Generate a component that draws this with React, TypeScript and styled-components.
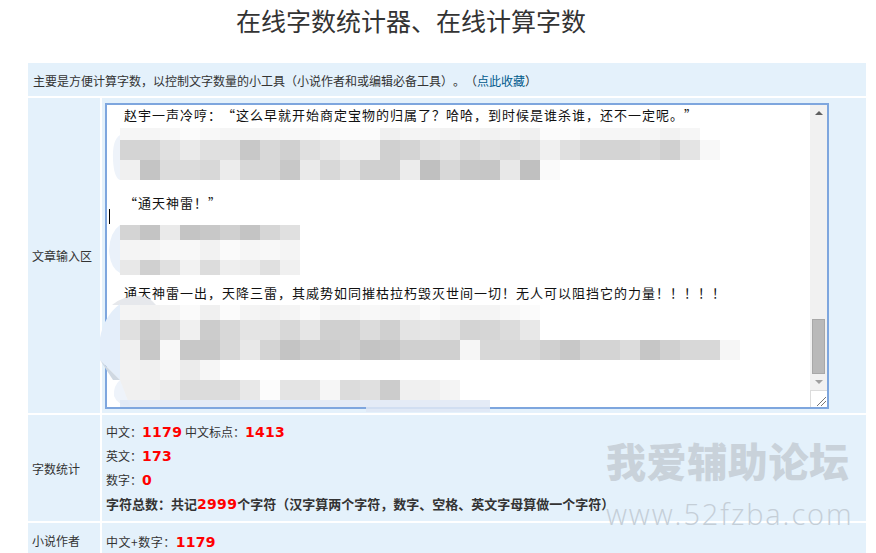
import * as React from 'react';
import styled, { createGlobalStyle } from 'styled-components';

const GlobalStyle = createGlobalStyle`
  html, body {
    margin: 0;
    padding: 0;
    height: 553px;
    overflow: hidden;
    background: #fff;
  }
  body {
    font-family: "Noto Sans CJK SC", "Liberation Sans", sans-serif;
    font-size: 12px;
    color: #333;
    text-spacing-trim: space-all;
  }
`;

const Page = styled.div`
  position: relative;
  width: 876px;
  height: 553px;
  overflow: hidden;
`;
const Title = styled.h1`
  margin: 0;
  padding: 4px 54px 0 0;
  height: 63px;
  box-sizing: border-box;
  text-align: center;
  font-size: 25px;
  line-height: 32px;
  font-weight: 400;
  color: #333;
`;
const Table = styled.div`
  margin: 0 10px 0 28px;
  display: grid;
  grid-template-columns: 72px 1fr;
  gap: 2px 2px;
`;
const Intro = styled.div`
  grid-column: 1 / 3;
  height: 33px;
  box-sizing: border-box;
  padding: 2px 0 0 5px;
  display: flex;
  align-items: center;
  background: #e4f1fb;
`;
const MoreLink = styled.a`
  color: #005a8c;
`;
const Label = styled.div<{ $top?: boolean }>`
  background: #e4f1fb;
  padding-left: 4px;
  display: flex;
  align-items: ${p => (p.$top ? 'flex-start' : 'center')};
  padding-top: ${p => (p.$top ? '9px' : '0')};
`;
const Cell = styled.div`
  background: #e4f1fb;
  padding: 5px 4px;
`;
const EditorCell = styled.div`
  background: #e4f1fb;
  padding: 5px 37px 4px 3px;
`;
const Editor = styled.div`
  height: 306px;
  box-sizing: border-box;
  border: 2px solid #7ea6de;
  background: #fff;
  display: flex;
  overflow: hidden;
`;
const Content = styled.div`
  position: relative;
  flex: 1;
  padding-left: 13px;
  overflow: hidden;
`;
const TextLine = styled.div<{ $after: number }>`
  height: 20px;
  line-height: 20px;
  margin-bottom: ${p => p.$after}px;
  padding-left: 4px;
  font-size: 13px;
  letter-spacing: 1px;
  color: #111;
  white-space: nowrap;
`;
const Mosaic = styled.div<{ $after: number }>`
  margin-bottom: ${p => p.$after}px;
`;
const MosaicRow = styled.div<{ $h: number }>`
  display: flex;
  height: ${p => p.$h}px;
`;
const MosaicCell = styled.span`
  width: 20px;
  flex: none;
`;
const Caret = styled.span`
  position: absolute;
  left: 2px;
  top: 104px;
  width: 1px;
  height: 15px;
  background: #000;
`;
const Scrollbar = styled.div`
  width: 17px;
  flex: none;
  background: #f1f1f1;
  display: flex;
  flex-direction: column;
  align-items: center;
`;
const ArrowUp = styled.span`
  margin-top: 6px;
  width: 0;
  height: 0;
  border-left: 4px solid transparent;
  border-right: 4px solid transparent;
  border-bottom: 4px solid #606060;
`;
const Thumb = styled.div`
  margin-top: 204px;
  width: 13px;
  height: 55px;
  box-sizing: border-box;
  background: #b9b9b9;
  border: 1px solid #a8a8a8;
`;
const ArrowDown = styled.span`
  margin-top: 6px;
  width: 0;
  height: 0;
  border-left: 4px solid transparent;
  border-right: 4px solid transparent;
  border-top: 4px solid #a0a0a0;
`;
const Corner = styled.div`
  margin-top: auto;
  width: 17px;
  height: 17px;
  box-sizing: border-box;
  background: #fff;
  border-left: 1px solid #dcdcdc;
  border-top: 1px solid #dcdcdc;
  display: flex;
`;
const StatLine = styled.div<{ $strong?: boolean }>`
  height: 24px;
  line-height: 24px;
  font-size: ${p => (p.$strong ? 13 : 12)}px;
  font-weight: ${p => (p.$strong ? 700 : 400)};
  white-space: nowrap;
`;
const Num = styled.span`
  font-family: "DejaVu Sans", sans-serif;
  font-size: 14px;
  font-weight: 700;
  letter-spacing: 0.3px;
  color: #f00;
`;
const LastCell = styled(Cell)`
  padding: 7px 4px 10px;
  letter-spacing: 0.5px;
`;
const WatermarkName = styled.div`
  position: absolute;
  left: 606px;
  top: 432px;
  font-size: 40px;
  line-height: 56px;
  font-weight: 900;
  letter-spacing: 0.6px;
  color: #c9d2da;
  white-space: nowrap;
`;
const WatermarkUrl = styled.div`
  position: absolute;
  left: 606px;
  top: 495px;
  font-family: "Open Sans", sans-serif;
  font-size: 29px;
  line-height: 38px;
  font-weight: 300;
  letter-spacing: 1.9px;
  color: #c4ced7;
  white-space: nowrap;
`;
const Smudges = styled.svg`
  position: absolute;
  left: 0;
  top: 0;
  pointer-events: none;
`;

const firstBlock = [
  { h: 12, g: 'f6 f5 f7 fb f8 f5 f5 f6 f8 f8 fa fb fb f0 f4 f4 f2 f4 f2 f4 f0 fb fb f6 f6 f6 f6 f2 f6' },
  { h: 20, g: 'd4 d4 e0 ea e0 e0 c8 d8 d0 e0 e6 ee ee d0 d4 e0 e4 d8 e0 dc e0 f0 e0 d4 d4 d4 d8 d0 e4 f8' },
  { h: 20, g: 'f0 c4 dc dc d8 ec d8 d8 c8 ea d8 e4 d0 d0 ec c0 d8 c8 c6 e8 c0 fa' }
];
const secondBlock = [
  { h: 15, g: 'd4 c4 ea c4 c8 d0 c4 d6 e0' },
  { h: 20, g: 'f4 f4 f8 f8 f2 fa f6 f8 f4' },
  { h: 15, g: 'e8 d0 e0 f2 dc ee ec e0 f0' }
];
const thirdBlock = [
  { h: 15, g: 'f4 f2 f4 fa f0 fb f4 f2 f4 fa f4 f4 f8 f6 f4 fa f6 f4 f4 f8 fb' },
  { h: 20, g: 'e0 cc dc f0 cc d8 e4 e4 d8 e6 d0 d0 dc d0 e4 e6 e4 d4 d6 dc e8' },
  { h: 20, g: 'f0 c8 f8 c8 c8 d8 e8 d4 c4 cc cc d0 c4 c6 d0 d0 d0 f6 d8 d8 d8 d0 c8 d4 d4 dc c6 d0 d8 d8 f6' },
  { h: 20, g: 'f2 f0 f6 ec f6' },
  { h: 20, g: 'f0 f0 ec dc dc dc e8 fc e4 e4 f6 dc e0 cc f0 f0 f4' }
];

const Pixels = ({ rows, after }: { rows: { h: number; g: string }[]; after: number }) => (
  <Mosaic $after={after}>
    {rows.map((row, i) => (
      <MosaicRow key={i} $h={row.h}>
        {row.g.split(' ').map((shade, j) => (
          <MosaicCell key={j} style={{ background: `#${shade}${shade}${shade}` }} />
        ))}
      </MosaicRow>
    ))}
  </Mosaic>
);

const App = () => {
  return (
    <Page>
      <GlobalStyle />
      <Title>在线字数统计器、在线计算字数</Title>
      <Table>
        <Intro>
          <span>
            主要是方便计算字数，以控制文字数量的小工具（小说作者和或编辑必备工具）。（
            <MoreLink>点此收藏</MoreLink>）
          </span>
        </Intro>
        <Label>文章输入区</Label>
        <EditorCell>
          <Editor>
            <Content>
              <TextLine $after={3}>赵宇一声冷哼：“这么早就开始商定宝物的归属了？哈哈，到时候是谁杀谁，还不一定呢。”</TextLine>
              <Pixels rows={firstBlock} after={13} />
              <TextLine $after={12}>“通天神雷！”</TextLine>
              <Pixels rows={secondBlock} after={8} />
              <TextLine $after={2}>通天神雷一出，天降三雷，其威势如同摧枯拉朽毁灭世间一切！无人可以阻挡它的力量！！！！！</TextLine>
              <Pixels rows={thirdBlock} after={0} />
              <Caret />
            </Content>
            <Scrollbar>
              <ArrowUp />
              <Thumb />
              <ArrowDown />
              <Corner>
                <svg width="16" height="16" viewBox="0 0 16 16">
                  <path d="M6 15 L15 6 M10 15 L15 10" stroke="#777" strokeWidth="1" fill="none" />
                </svg>
              </Corner>
            </Scrollbar>
          </Editor>
        </EditorCell>
        <Label>字数统计</Label>
        <Cell>
          <StatLine>
            中文：<Num>1179</Num> 中文标点：<Num>1413</Num>
          </StatLine>
          <StatLine>
            英文：<Num>173</Num>
          </StatLine>
          <StatLine>
            数字：<Num>0</Num>
          </StatLine>
          <StatLine $strong>
            字符总数：共记<Num>2999</Num>个字符（汉字算两个字符，数字、空格、英文字母算做一个字符）
          </StatLine>
        </Cell>
        <Label $top>小说作者</Label>
        <LastCell>
          <StatLine>
            中文+数字：<Num>1179</Num>
          </StatLine>
        </LastCell>
      </Table>
      <Smudges width="876" height="553" viewBox="0 0 876 553">
        <path d="M120 135 Q112 140 113 160 Q114 178 120 180 Z" fill="#eef3fa" />
        <path d="M120 225 Q110 232 109 250 Q110 268 120 273 Z" fill="#eaf1fa" />
        <path d="M112 305 Q122 296 140 296 Q150 297 156 305 Z" fill="#e6e8ec" />
        <path d="M120 304 Q104 316 100 338 L100 360 L120 380 Z" fill="#e4eefa" />
        <path d="M100 360 L120 380 L113 380 Z" fill="#cfd8e2" />
        <path d="M120 380 Q113 386 114 396 Q117 405 130 406 L120 380 Z" fill="#eef3fa" />
        <path d="M120 400 L490 400 L490 412 L366 412 L366 407 L120 407 Z" fill="#dfe8f5" opacity="0.85" />
      </Smudges>
      <WatermarkName>我爱辅助论坛</WatermarkName>
      <WatermarkUrl>www.52fzba.com</WatermarkUrl>
    </Page>
  );
};

export default App;
